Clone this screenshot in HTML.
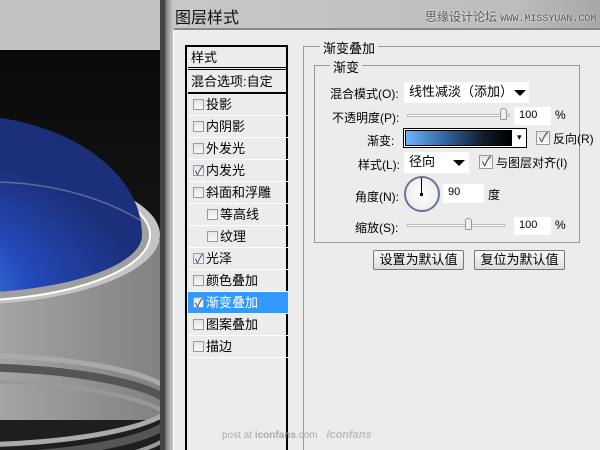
<!DOCTYPE html><html><head><meta charset="utf-8"><style>
*{margin:0;padding:0;box-sizing:border-box}
html,body{width:600px;height:450px;overflow:hidden}
body{position:relative;background:#ececec;font-family:"Liberation Sans","Noto Sans CJK SC",sans-serif;font-size:12px;color:#000}
.a{position:absolute}
.cb{position:absolute;width:11px;height:11px;border:1px solid #9a9a9a;background:linear-gradient(#e4e4e4,#fafafa)}
.row{position:absolute;left:1px;width:100px;height:22px;border-bottom:1px solid #fff;line-height:21px;font-size:13px}
.inp{position:absolute;background:#fff;border:1px solid #d8d8d8;font-size:11px;line-height:16px;padding-left:5px}
.lbl{position:absolute;font-size:12px}
.tri{position:absolute;width:0;height:0;border-left:6px solid transparent;border-right:6px solid transparent;border-top:6px solid #000}
.btn{position:absolute;height:20px;border:1px solid #777;border-radius:2px;background:linear-gradient(#fafafa,#dcdcdc);font-size:13px;text-align:center;line-height:18px}
.ck{position:absolute;color:#335;font-size:12px;line-height:11px}
</style></head><body>
<svg class="a" style="left:0;top:0" width="166" height="450">
<defs>
<linearGradient id="bg" x1="0" y1="0" x2="0" y2="1"><stop offset="0" stop-color="#0a0a0a"/><stop offset="1" stop-color="#1f1f1f"/></linearGradient>
<linearGradient id="met" x1="0" y1="0" x2="1" y2="0"><stop offset="0" stop-color="#8a8a8a"/><stop offset=".3" stop-color="#d0d0d0"/><stop offset=".55" stop-color="#a8a8a8"/><stop offset="1" stop-color="#808080"/></linearGradient>
<radialGradient id="dome" cx="0.15" cy="1" r="0.85"><stop offset="0" stop-color="#7ef0ff"/><stop offset=".3" stop-color="#4a90f0"/><stop offset=".65" stop-color="#2348b8"/><stop offset="1" stop-color="#1c2f7a"/></radialGradient>
</defs>
<rect width="166" height="50" fill="#c2c2c2"/>
<rect y="50" width="166" height="400" fill="url(#bg)"/>
<path d="M-240 240 L160 240 L166 420 L-240 420Z" fill="url(#met)"/>
<ellipse cx="-40" cy="400" rx="215" ry="45" fill="none" stroke="#aaa" stroke-width="5"/>
<ellipse cx="-40" cy="412" rx="215" ry="45" fill="none" stroke="#555" stroke-width="8"/>
<ellipse cx="-40" cy="426" rx="215" ry="45" fill="none" stroke="#999" stroke-width="4"/>
<ellipse cx="-40" cy="235" rx="200" ry="70" fill="#c4c4c4"/>
<ellipse cx="-40" cy="235" rx="190" ry="66" fill="#a0a0a0" stroke="#fff" stroke-width="2"/>
<ellipse cx="-40" cy="235" rx="182" ry="58" fill="#2a4fb8"/>
<path d="M-222 235 A182 120 0 0 1 142 235 A182 58 0 0 1 -222 235Z" fill="url(#dome)"/>
<path d="M0 182 Q80 185 140 220" stroke="#9ab" stroke-width="1.5" fill="none" opacity=".5"/>
<rect x="160" y="0" width="6" height="450" fill="#444"/>
</svg>
<div class="a" style="left:165px;top:0;width:435px;height:29px;background:linear-gradient(90deg,#c8c8c8,#bdbdbd 80%,#a8a8a8)"></div>
<div class="a" style="left:175px;top:4px;font-size:16px;color:#111">图层样式</div>
<div class="a" style="left:425px;top:8px;font-size:12px;color:#555;text-shadow:0 0 2px #fff">思缘设计论坛 <span style="font-size:10px;font-family:'Liberation Mono',monospace">WWW.MISSYUAN.COM</span></div>
<div class="a" style="left:165px;top:0;width:8px;height:450px;background:linear-gradient(90deg,#666,#999 40%,#c8c8c8)"></div>
<div class="a" style="left:173px;top:28px;width:427px;height:422px;background:#ececec;border-top:2px solid #888;border-left:1px solid #fff"></div>
<div class="a" style="left:185px;top:45px;width:103px;height:405px;border:2px solid #000;border-bottom:none;background:#ececec">
 <div class="row" style="top:0;height:23px;border-bottom:3px double #000;padding-left:3px">样式</div>
 <div class="row" style="top:24px;height:23px;border-bottom:2px solid #000;padding-left:3px">混合选项:自定</div>
 <div class="row" style="top:47px"><span class="cb" style="left:5px;top:5px"></span><span class="a" style="left:18px">投影</span></div>
 <div class="row" style="top:69px"><span class="cb" style="left:5px;top:5px"></span><span class="a" style="left:18px">内阴影</span></div>
 <div class="row" style="top:91px"><span class="cb" style="left:5px;top:5px"></span><span class="a" style="left:18px">外发光</span></div>
 <div class="row" style="top:113px"><span class="cb" style="left:5px;top:5px"></span><span class="ck" style="left:7px;top:6px">✓</span><span class="a" style="left:18px">内发光</span></div>
 <div class="row" style="top:135px"><span class="cb" style="left:5px;top:5px"></span><span class="a" style="left:18px">斜面和浮雕</span></div>
 <div class="row" style="top:157px"><span class="cb" style="left:19px;top:5px"></span><span class="a" style="left:32px">等高线</span></div>
 <div class="row" style="top:179px"><span class="cb" style="left:19px;top:5px"></span><span class="a" style="left:32px">纹理</span></div>
 <div class="row" style="top:201px"><span class="cb" style="left:5px;top:5px"></span><span class="ck" style="left:7px;top:6px">✓</span><span class="a" style="left:18px">光泽</span></div>
 <div class="row" style="top:223px"><span class="cb" style="left:5px;top:5px"></span><span class="a" style="left:18px">颜色叠加</span></div>
 <div class="row" style="top:245px;background:#3399ff;color:#fff"><span class="cb" style="left:5px;top:5px"></span><span class="ck" style="left:7px;top:6px">✓</span><span class="a" style="left:18px">渐变叠加</span></div>
 <div class="row" style="top:267px"><span class="cb" style="left:5px;top:5px"></span><span class="a" style="left:18px">图案叠加</span></div>
 <div class="row" style="top:289px"><span class="cb" style="left:5px;top:5px"></span><span class="a" style="left:18px">描边</span></div>
</div>
<div class="a" style="left:303px;top:46px;width:297px;height:404px;border-left:1px solid #999;border-top:1px solid #999"></div>
<div class="a" style="left:320px;top:38px;background:#ececec;padding:0 3px;font-size:13px">渐变叠加</div>
<div class="a" style="left:314px;top:65px;width:266px;height:178px;border:1px solid #999"></div>
<div class="a" style="left:330px;top:57px;background:#ececec;padding:0 3px;font-size:13px">渐变</div>
<div class="lbl" style="left:330px;top:85px">混合模式(O):</div>
<div class="inp" style="left:404px;top:82px;width:125px;height:21px;font-size:13px;line-height:19px;border:none">线性减淡（添加）</div><div class="tri" style="left:514px;top:90px"></div>
<div class="lbl" style="left:332px;top:109px">不透明度(P):</div>
<div class="a" style="left:407px;top:114px;width:103px;height:3px;border:1px solid #bbb;background:#fff"></div>
<div class="a" style="left:500px;top:108px;width:7px;height:12px;border:1px solid #999;border-radius:3px 3px 1px 1px;background:#eee"></div>
<div class="inp" style="left:514px;top:107px;width:37px;height:18px;border:none">100</div>
<div class="a" style="left:555px;top:108px">%</div>
<div class="lbl" style="left:367px;top:132px">渐变:</div>
<div class="a" style="left:403px;top:128px;width:124px;height:20px;border:1px solid #000;background:#fff;padding:1px"><div style="width:107px;height:16px;border:1px solid #000;background:linear-gradient(90deg,#6db3ff,#2f5f96 40%,#101a28 75%,#000)"></div><div class="a" style="left:113px;top:3px;font-size:9px">▾</div></div>
<div class="cb" style="left:536px;top:131px;width:14px;height:14px"></div><div class="ck" style="left:539px;top:132px;font-size:13px">✓</div>
<div class="a" style="left:553px;top:130px">反向(R)</div>
<div class="lbl" style="left:358px;top:156px">样式(L):</div>
<div class="inp" style="left:404px;top:152px;width:65px;height:21px;font-size:13px;line-height:19px;border:none">径向</div><div class="tri" style="left:453px;top:160px"></div>
<div class="cb" style="left:479px;top:155px;width:14px;height:14px"></div><div class="ck" style="left:482px;top:156px;font-size:13px">✓</div>
<div class="a" style="left:496px;top:154px">与图层对齐(I)</div>
<div class="lbl" style="left:355px;top:188px">角度(N):</div>
<div class="a" style="left:404px;top:176px;width:36px;height:36px;border-radius:50%;border:2px solid #67759a;background:radial-gradient(#fff,#e8e8e8)"></div>
<div class="a" style="left:421px;top:178px;width:1px;height:16px;background:#000"></div>
<div class="a" style="left:420px;top:193px;width:3px;height:3px;background:#000"></div>
<div class="inp" style="left:443px;top:184px;width:41px;height:19px;border:none">90</div>
<div class="a" style="left:488px;top:186px">度</div>
<div class="lbl" style="left:355px;top:219px">缩放(S):</div>
<div class="a" style="left:407px;top:224px;width:98px;height:3px;border:1px solid #bbb;background:#fff"></div>
<div class="a" style="left:465px;top:218px;width:7px;height:12px;border:1px solid #999;border-radius:3px 3px 1px 1px;background:#eee"></div>
<div class="inp" style="left:514px;top:217px;width:37px;height:18px;border:none">100</div>
<div class="a" style="left:555px;top:218px">%</div>
<div class="btn" style="left:373px;top:250px;width:91px">设置为默认值</div>
<div class="btn" style="left:474px;top:250px;width:91px">复位为默认值</div>
<div class="a" style="left:222px;top:429px;font-size:10px;color:#aaa">post at <b>iconfans</b>.com <i style="font-weight:bold;font-size:11px;color:#bbb;margin-left:6px">Iconfans</i></div>
</body></html>
